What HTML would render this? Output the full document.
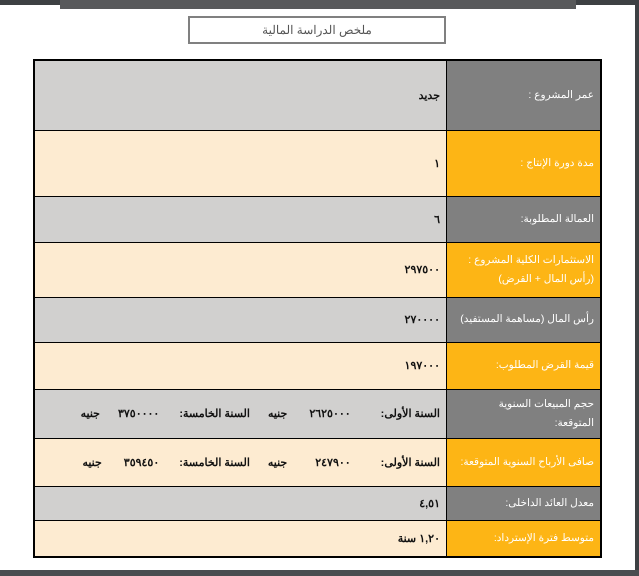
<!DOCTYPE html>
<html><head><meta charset="utf-8"><style>
body{margin:0;width:639px;height:576px;background:#fff;position:relative;overflow:hidden;font-family:"Liberation Sans","Noto Sans CJK SC",sans-serif;}
.topbar{position:absolute;left:0;top:0;width:639px;height:5px;background:#3d4043;}
.topin{position:absolute;left:60px;top:0;width:516px;height:9px;background:#58595b;}
.right{position:absolute;right:0;top:0;width:4px;height:576px;background:#3d4043;}
.bot{position:absolute;left:0;top:570px;width:639px;height:6px;background:#4a4d50;}
.title{position:absolute;left:188px;top:16px;width:254px;height:24px;border:2px solid #808080;text-align:center;font-size:12px;line-height:24px;color:#555;direction:rtl;}
table{position:absolute;left:33px;top:59px;width:569px;border-collapse:collapse;border:2px solid #000;direction:rtl;font-size:11px;}
td{border:1.5px solid #000;padding:0 6px;}
td.l{width:141px;color:#fff;line-height:19px;font-size:10.5px;white-space:nowrap;}
td.v{font-weight:bold;color:#111;}
.g td.l{background:#808080}.g td.v{background:#d1d0cf}
.o td.l{background:#fdb515}.o td.v{background:#fdebd1}
</style></head><body>
<div class="topbar"></div><div class="topin"></div><div class="right"></div><div class="bot"></div>
<div class="title">ملخص الدراسة المالية</div>
<table>
<tr class="g" style="height:70px"><td class="l">عمر المشروع :</td><td class="v">جديد</td></tr>
<tr class="o" style="height:66px"><td class="l">مدة دورة الإنتاج :</td><td class="v">١</td></tr>
<tr class="g" style="height:46px"><td class="l">العمالة المطلوبة:</td><td class="v">٦</td></tr>
<tr class="o" style="height:55px"><td class="l">الاستثمارات الكلية المشروع :<br>(رأس المال + القرض)</td><td class="v">٢٩٧٥٠٠</td></tr>
<tr class="g" style="height:45px"><td class="l">رأس المال (مساهمة المستفيد)</td><td class="v">٢٧٠٠٠٠</td></tr>
<tr class="o" style="height:47px"><td class="l">قيمة القرض المطلوب:</td><td class="v">١٩٧٠٠٠</td></tr>
<tr class="g" style="height:49px"><td class="l">حجم المبيعات السنوية<br>المتوقعة:</td><td class="v">السنة الأولى:<span style="display:inline-block;width:30px"></span>٢٦٢٥٠٠٠<span style="display:inline-block;width:22px"></span>جنيه<span style="display:inline-block;width:18px"></span>السنة الخامسة:<span style="display:inline-block;width:20px"></span>٣٧٥٠٠٠٠<span style="display:inline-block;width:18px"></span>جنيه</td></tr>
<tr class="o" style="height:48px"><td class="l">صافى الأرباح السنوية المتوقعة:</td><td class="v">السنة الأولى:<span style="display:inline-block;width:30px"></span>٢٤٧٩٠٠<span style="display:inline-block;width:28px"></span>جنيه<span style="display:inline-block;width:18px"></span>السنة الخامسة:<span style="display:inline-block;width:20px"></span>٣٥٩٤٥٠<span style="display:inline-block;width:22px"></span>جنيه</td></tr>
<tr class="g" style="height:34px"><td class="l">معدل العائد الداخلى:</td><td class="v">٤,٥١</td></tr>
<tr class="o" style="height:37px"><td class="l">متوسط فترة الإسترداد:</td><td class="v">١,٢٠ سنة</td></tr>
</table>
</body></html>
